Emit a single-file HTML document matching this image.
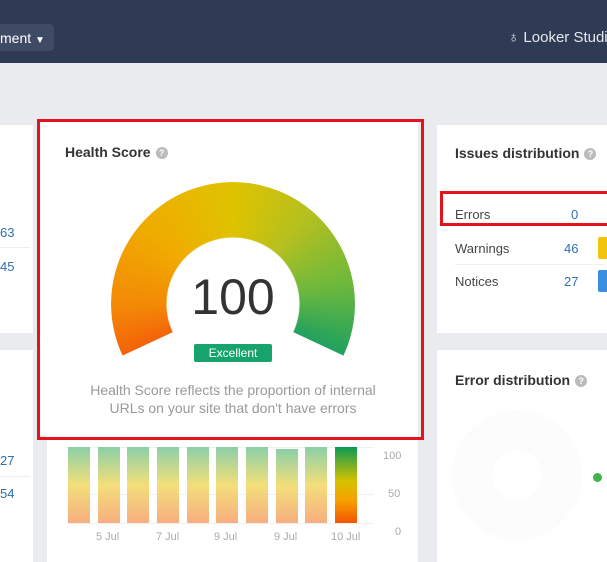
<!DOCTYPE html>
<html><head><style>
body{margin:0;width:607px;height:562px;overflow:hidden;background:#e9ebee;font-family:"Liberation Sans",sans-serif;position:relative}
.a{position:absolute;white-space:nowrap}
.card{position:absolute;background:#fff}
.q{display:inline-block;width:12px;height:12px;border-radius:50%;background:#bbb;color:#fff;font-size:9px;font-weight:bold;text-align:center;line-height:12px;vertical-align:1px;margin-left:5px}
.bar{position:absolute;top:447px;width:22px;height:76px;background:linear-gradient(#8ccfa8,#f3df7a 50%,#f8ad80)}
.xl{position:absolute;top:531px;font-size:11px;color:#aaa}
</style></head><body>
<div class="a" style="left:0;top:0;width:607px;height:63px;background:#2f3b55"></div>
<div class="a" style="left:-10px;top:24px;width:64px;height:27px;background:#3f4b64;border-radius:4px"></div>
<div class="a" style="left:0;top:30px;color:#fff;font-size:14px">ment <span style="font-size:10px">▼</span></div>
<div class="a" style="left:508px;top:29px;color:#e6e8ee;font-size:15px"><span style="font-size:15px">♁</span> Looker Studio</div>

<div class="card" style="left:0;top:125px;width:33px;height:208px"></div>
<div class="a" style="left:0;top:225px;font-size:13px;color:#2f6fb0">63</div>
<div class="a" style="left:0;top:247px;width:30px;height:1px;background:#eee"></div>
<div class="a" style="left:0;top:259px;font-size:13px;color:#2f6fb0">45</div>
<div class="card" style="left:0;top:350px;width:33px;height:212px"></div>
<div class="a" style="left:0;top:453px;font-size:13px;color:#2f6fb0">27</div>
<div class="a" style="left:0;top:476px;width:30px;height:1px;background:#eee"></div>
<div class="a" style="left:0;top:486px;font-size:13px;color:#2f6fb0">54</div>

<div class="card" style="left:47px;top:125px;width:371px;height:437px"></div>
<div class="card" style="left:40px;top:122px;width:378px;height:313px"></div>
<div class="a" style="left:37px;top:119px;width:381px;height:315px;border:3px solid #e4141e"></div>
<div class="a" style="left:65px;top:144px;font-size:14px;font-weight:bold;color:#333">Health Score<span class="q">?</span></div>
<div class="a" style="left:111px;top:182px;width:244px;height:244px;border-radius:50%;background:conic-gradient(#dfc300 0deg,#b5c01f 40deg,#6db83d 80deg,#2aa45a 110deg,#0f9b6c 125deg,#0f9b6c 235deg,#f45b0a 240deg,#f38a06 270deg,#f0ab00 310deg,#dfc300 360deg);-webkit-mask:radial-gradient(circle,transparent 66px,#000 67px);mask:radial-gradient(circle,transparent 66px,#000 67px);clip-path:polygon(0 0,100% 0,100% 179px,50% 50%,0 179px)"></div>
<div class="a" style="left:133px;top:268px;width:200px;text-align:center;font-size:50px;color:#333">100</div>
<div class="a" style="left:194px;top:344px;width:78px;height:18px;background:#17a36c;border-radius:2px;color:#fff;font-size:12px;text-align:center;line-height:18px">Excellent</div>
<div class="a" style="left:60px;top:381px;width:346px;text-align:center;font-size:14px;line-height:18px;color:#999;white-space:normal">Health Score reflects the proportion of internal<br>URLs on your site that don't have errors</div>

<div class="a" style="left:66px;top:447px;width:308px;height:1px;background:#f0f0f0"></div>
<div class="a" style="left:66px;top:494px;width:308px;height:1px;background:#f0f0f0"></div>
<div class="a" style="left:66px;top:523px;width:308px;height:1px;background:#f0f0f0"></div>
<div class="bar" style="left:68px"></div><div class="bar" style="left:98px"></div><div class="bar" style="left:127px"></div><div class="bar" style="left:157px"></div><div class="bar" style="left:187px"></div><div class="bar" style="left:216px"></div><div class="bar" style="left:246px"></div><div class="bar" style="left:276px;top:449px;height:74px"></div><div class="bar" style="left:305px"></div>
<div class="bar" style="left:335px;background:linear-gradient(#0c9a55,#d6c200 45%,#f7a000 70%,#f35500)"></div>
<div class="a" style="left:383px;top:450px;font-size:11px;color:#aaa">100</div>
<div class="a" style="left:388px;top:488px;font-size:11px;color:#aaa">50</div>
<div class="a" style="left:395px;top:526px;font-size:11px;color:#aaa">0</div>
<div class="xl" style="left:96px">5 Jul</div><div class="xl" style="left:156px">7 Jul</div><div class="xl" style="left:214px">9 Jul</div><div class="xl" style="left:274px">9 Jul</div><div class="xl" style="left:331px">10 Jul</div>

<div class="card" style="left:437px;top:125px;width:170px;height:208px"></div>
<div class="a" style="left:455px;top:145px;font-size:14px;font-weight:bold;color:#333">Issues distribution<span class="q">?</span></div>
<div class="a" style="left:440px;top:191px;width:170px;height:35px;border:3px solid #e4141e;box-sizing:border-box"></div>
<div class="a" style="left:455px;top:207px;font-size:13px;color:#444">Errors</div>
<div class="a" style="left:571px;top:207px;font-size:13px;color:#2f6fb0">0</div>
<div class="a" style="left:455px;top:241px;font-size:13px;color:#444">Warnings</div>
<div class="a" style="left:564px;top:241px;font-size:13px;color:#2f6fb0">46</div>
<div class="a" style="left:598px;top:237px;width:12px;height:22px;background:#f1c40f;border-radius:2px"></div>
<div class="a" style="left:455px;top:264px;width:150px;height:1px;background:#eee"></div>
<div class="a" style="left:455px;top:274px;font-size:13px;color:#444">Notices</div>
<div class="a" style="left:564px;top:274px;font-size:13px;color:#2f6fb0">27</div>
<div class="a" style="left:598px;top:270px;width:12px;height:22px;background:#3a8ee0;border-radius:2px"></div>

<div class="card" style="left:437px;top:350px;width:170px;height:212px"></div>
<div class="a" style="left:455px;top:372px;font-size:14px;font-weight:bold;color:#333">Error distribution<span class="q">?</span></div>
<div class="a" style="left:452px;top:410px;width:130px;height:130px;border-radius:50%;box-sizing:border-box;border:40px solid #fcfcfc"></div>
<div class="a" style="left:593px;top:473px;width:9px;height:9px;border-radius:50%;background:#3db54a"></div>
</body></html>
